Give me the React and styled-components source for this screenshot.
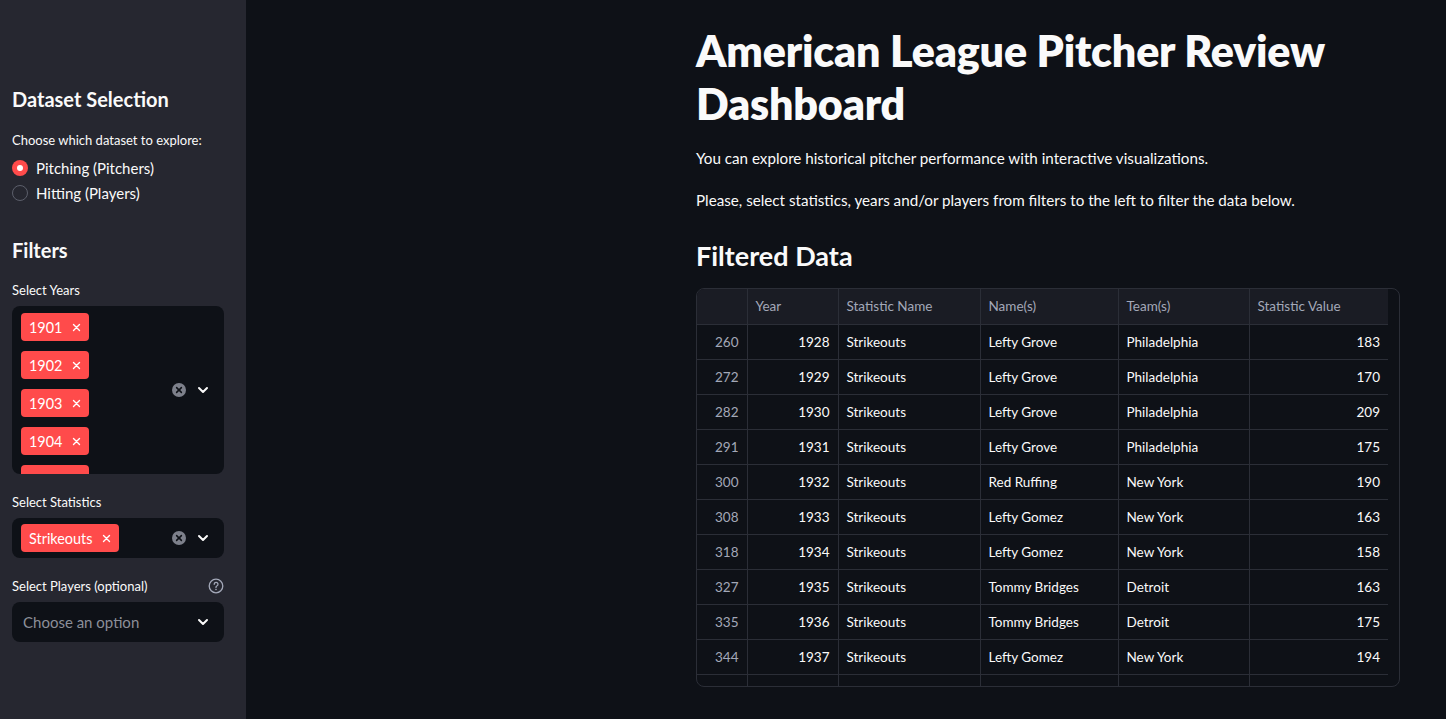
import React from 'react';
import styled, { createGlobalStyle } from 'styled-components';

const GlobalStyle = createGlobalStyle`
  html, body {
    margin: 0;
    padding: 0;
    background: #0e1117;
    font-family: Lato, "Noto Sans", sans-serif;
    color: #fafafa;
  }
  * { box-sizing: border-box; }
`;

const Page = styled.div`
  display: flex;
  width: 1446px;
  height: 719px;
  overflow: hidden;
`;

const Sidebar = styled.aside`
  width: 246px;
  flex-shrink: 0;
  background: #262730;
  padding: 86px 22px 0 12px;
  display: flex;
  flex-direction: column;
`;

const SideHeading = styled.h2`
  margin: 0 0 ${p => p.$gap || 12}px;
  font-size: 20px;
  font-weight: 700;
  line-height: 26px;
`;

const Label = styled.div`
  display: flex;
  justify-content: space-between;
  align-items: center;
  font-size: 13px;
  line-height: 18px;
  margin-bottom: ${p => p.$gap || 7}px;
  color: #fafafa;
`;

const RadioGroup = styled.div`
  display: flex;
  flex-direction: column;
  gap: 5px;
  margin-bottom: 34px;
`;

const RadioRow = styled.label`
  display: flex;
  align-items: center;
  gap: 8px;
  font-size: 15px;
  line-height: 20px;
`;

const RadioDot = styled.span`
  width: 16px;
  height: 16px;
  border-radius: 50%;
  display: flex;
  align-items: center;
  justify-content: center;
  background: ${p => (p.$on ? '#ff4b4b' : 'transparent')};
  border: ${p => (p.$on ? 'none' : '1px solid #5c5f6b')};
  &::after {
    content: '';
    width: 6px;
    height: 6px;
    border-radius: 50%;
    background: ${p => (p.$on ? '#fff' : 'transparent')};
  }
`;

const Field = styled.div`
  margin-bottom: ${p => p.$gap || 20}px;
`;

const SelectBox = styled.div`
  background: #0e1117;
  border-radius: 8px;
  height: ${p => p.$h}px;
  display: flex;
  align-items: center;
  padding: 0 14px 0 9px;
  overflow: hidden;
`;

const Tags = styled.div`
  flex: 1;
  display: flex;
  flex-direction: column;
  gap: 10px;
  align-self: flex-start;
  padding-top: ${p => p.$pt || 0}px;
`;

const Tag = styled.span`
  display: inline-flex;
  align-items: center;
  gap: 10px;
  align-self: flex-start;
  background: #ff4b4b;
  color: #fff;
  border-radius: 4px;
  height: 28px;
  padding: 0 8px;
  font-size: 14.4px;
  flex-shrink: 0;
`;

const Placeholder = styled.span`
  flex: 1;
  color: #8c8f99;
  font-size: 15px;
  padding-left: 2px;
`;

const Icons = styled.div`
  display: flex;
  align-items: center;
  gap: 10px;
`;

const Main = styled.main`
  flex: 1;
  display: flex;
  justify-content: flex-end;
  padding: 24px 46px 0 0;
`;

const Content = styled.div`
  width: 704px;
`;

const Title = styled.h1`
  margin: 0 0 16px;
  font-size: 43px;
  font-weight: 800;
  line-height: 53px;
  letter-spacing: -0.2px;
`;

const Para = styled.p`
  margin: 0 0 18px;
  font-size: 15.2px;
  line-height: 24px;
`;

const SubTitle = styled.h2`
  margin: 26px 0 14px;
  font-size: 27px;
  font-weight: 700;
  line-height: 36px;
`;

const TableWrap = styled.div`
  border: 1px solid #2b2e37;
  border-radius: 8px;
  height: 399px;
  overflow: hidden;
  padding-right: 10px;
  background: #0e1117;
`;

const Grid = styled.table`
  border-collapse: collapse;
  width: 691px;
  font-size: 13.5px;
  table-layout: fixed;
`;

const Th = styled.th`
  background: #1a1c24;
  color: #a3a8b8;
  font-weight: 400;
  text-align: left;
  height: 35px;
  padding: 0 8px;
  border-right: 1px solid #2b2e37;
  border-bottom: 1px solid #2b2e37;
  &:last-child { border-right: none; }
`;

const Td = styled.td`
  height: 35px;
  padding: 0 8px;
  text-align: ${p => (p.$right ? 'right' : 'left')};
  color: ${p => (p.$muted ? '#a3a8b8' : '#fafafa')};
  border-right: 1px solid #2b2e37;
  border-bottom: 1px solid #2b2e37;
  white-space: nowrap;
  &:last-child { border-right: none; }
`;

const ClearIcon = () => (
  <svg width="14" height="14" viewBox="0 0 14 14">
    <circle cx="7" cy="7" r="7" fill="#7d808b" />
    <path d="M4.6 4.6l4.8 4.8M9.4 4.6l-4.8 4.8" stroke="#0e1117" strokeWidth="1.5" strokeLinecap="round" />
  </svg>
);

const Chevron = () => (
  <svg width="14" height="14" viewBox="0 0 14 14">
    <path d="M3 5l4 4 4-4" stroke="#fafafa" strokeWidth="2" fill="none" strokeLinecap="round" strokeLinejoin="round" />
  </svg>
);

const X = () => (
  <svg width="9" height="9" viewBox="0 0 9 9">
    <path d="M1.5 1.5l6 6M7.5 1.5l-6 6" stroke="#fff" strokeWidth="1.4" strokeLinecap="round" />
  </svg>
);

const Help = () => (
  <svg width="16" height="16" viewBox="0 0 16 16">
    <circle cx="8" cy="8" r="6.8" stroke="#a3a8b8" strokeWidth="1.3" fill="none" />
    <path d="M6.2 6.3a1.9 1.9 0 1 1 2.6 1.7c-.5.3-.8.6-.8 1.2v.3" stroke="#a3a8b8" strokeWidth="1.3" fill="none" strokeLinecap="round" />
    <circle cx="8" cy="11.5" r=".8" fill="#a3a8b8" />
  </svg>
);

const rows = [
  [260, 1928, 'Lefty Grove', 'Philadelphia', 183],
  [272, 1929, 'Lefty Grove', 'Philadelphia', 170],
  [282, 1930, 'Lefty Grove', 'Philadelphia', 209],
  [291, 1931, 'Lefty Grove', 'Philadelphia', 175],
  [300, 1932, 'Red Ruffing', 'New York', 190],
  [308, 1933, 'Lefty Gomez', 'New York', 163],
  [318, 1934, 'Lefty Gomez', 'New York', 158],
  [327, 1935, 'Tommy Bridges', 'Detroit', 163],
  [335, 1936, 'Tommy Bridges', 'Detroit', 175],
  [344, 1937, 'Lefty Gomez', 'New York', 194],
  [352, 1938, 'Bob Feller', 'Cleveland', 240],
];

const cols = [
  { w: 50 },
  { w: 91, label: 'Year' },
  { w: 142, label: 'Statistic Name' },
  { w: 138, label: 'Name(s)' },
  { w: 131, label: 'Team(s)' },
  { w: 139, label: 'Statistic Value' },
];

const App = () => (
  <Page>
    <GlobalStyle />
    <Sidebar>
      <SideHeading $gap={19}>Dataset Selection</SideHeading>
      <Label $gap={9}>Choose which dataset to explore:</Label>
      <RadioGroup>
        <RadioRow><RadioDot $on />Pitching (Pitchers)</RadioRow>
        <RadioRow><RadioDot />Hitting (Players)</RadioRow>
      </RadioGroup>
      <SideHeading $gap={18}>Filters</SideHeading>
      <Field $gap={19}>
        <Label>Select Years</Label>
        <SelectBox $h={168}>
          <Tags $pt={7}>
            {[1901, 1902, 1903, 1904, 1905].map(y => (
              <Tag key={y}>{y}<X /></Tag>
            ))}
          </Tags>
          <Icons><ClearIcon /><Chevron /></Icons>
        </SelectBox>
      </Field>
      <Field $gap={19}>
        <Label>Select Statistics</Label>
        <SelectBox $h={40}>
          <Tags $pt={6}>
            <Tag>Strikeouts<X /></Tag>
          </Tags>
          <Icons><ClearIcon /><Chevron /></Icons>
        </SelectBox>
      </Field>
      <Field>
        <Label>Select Players (optional)<Help /></Label>
        <SelectBox $h={40}>
          <Placeholder>Choose an option</Placeholder>
          <Icons><Chevron /></Icons>
        </SelectBox>
      </Field>
    </Sidebar>
    <Main>
      <Content>
        <Title>American League Pitcher Review Dashboard</Title>
        <Para>You can explore historical pitcher performance with interactive visualizations.</Para>
        <Para>Please, select statistics, years and/or players from filters to the left to filter the data below.</Para>
        <SubTitle>Filtered Data</SubTitle>
        <TableWrap>
          <Grid>
            <colgroup>
              {cols.map((c, i) => <col key={i} style={{ width: c.w }} />)}
            </colgroup>
            <thead>
              <tr>{cols.map((c, i) => <Th key={i}>{c.label}</Th>)}</tr>
            </thead>
            <tbody>
              {rows.map(r => (
                <tr key={r[0]}>
                  <Td $right $muted>{r[0]}</Td>
                  <Td $right>{r[1]}</Td>
                  <Td>Strikeouts</Td>
                  <Td>{r[2]}</Td>
                  <Td>{r[3]}</Td>
                  <Td $right>{r[4]}</Td>
                </tr>
              ))}
            </tbody>
          </Grid>
        </TableWrap>
      </Content>
    </Main>
  </Page>
);

export default App;
